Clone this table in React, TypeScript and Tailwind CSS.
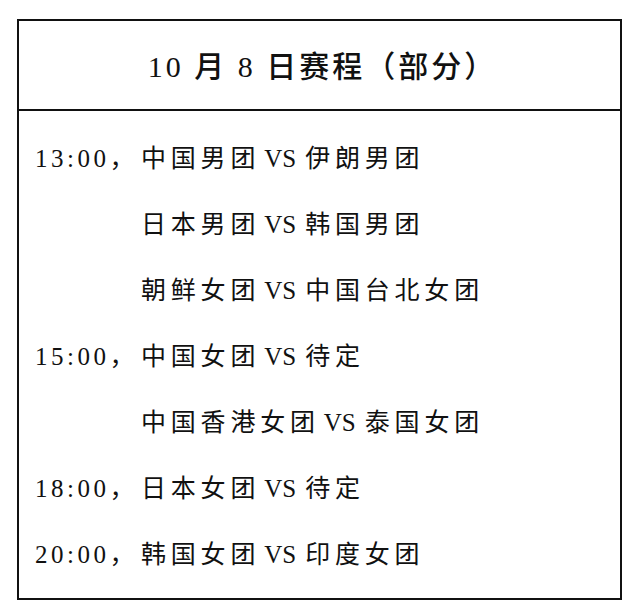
import React from "react";

const rows: { time?: string; text: [string, string] }[] = [
  { time: "13:00，", text: ["中国男团", "伊朗男团"] },
  { text: ["日本男团", "韩国男团"] },
  { text: ["朝鲜女团", "中国台北女团"] },
  { time: "15:00，", text: ["中国女团", "待定"] },
  { text: ["中国香港女团", "泰国女团"] },
  { time: "18:00，", text: ["日本女团", "待定"] },
  { time: "20:00，", text: ["韩国女团", "印度女团"] },
];

export default function App() {
  return (
    <div
      className="w-[640px] h-[615px] bg-white pt-[19px] pl-[17px] text-[#111]"
      style={{ fontFamily: '"Liberation Serif", "Noto Sans CJK SC", serif' }}
    >
      <div className="w-[605px] h-[581px] border-2 border-[#111] flex flex-col">
        <div className="h-[90px] border-b-2 border-[#111] flex items-center justify-center pl-[6px] pt-[3px]">
          <span className="text-[30px] tracking-[3px] font-medium leading-none">
            10 月 8 日赛程（部分）
          </span>
        </div>
        <div className="flex flex-col pt-[14px] pl-[16px]">
          {rows.map((r, i) => (
            <div key={i} className="h-[66px] flex items-center text-[25px] leading-none">
              <span className="w-[106px] shrink-0 tracking-[3.5px] whitespace-nowrap">{r.time ?? ""}</span>
              <span className="tracking-[4.8px] whitespace-nowrap">{r.text[0]}</span>
              <span className="tracking-[0px] pl-[4px] pr-[9px]">VS</span>
              <span className="tracking-[4.8px] whitespace-nowrap">{r.text[1]}</span>
            </div>
          ))}
        </div>
      </div>
    </div>
  );
}
